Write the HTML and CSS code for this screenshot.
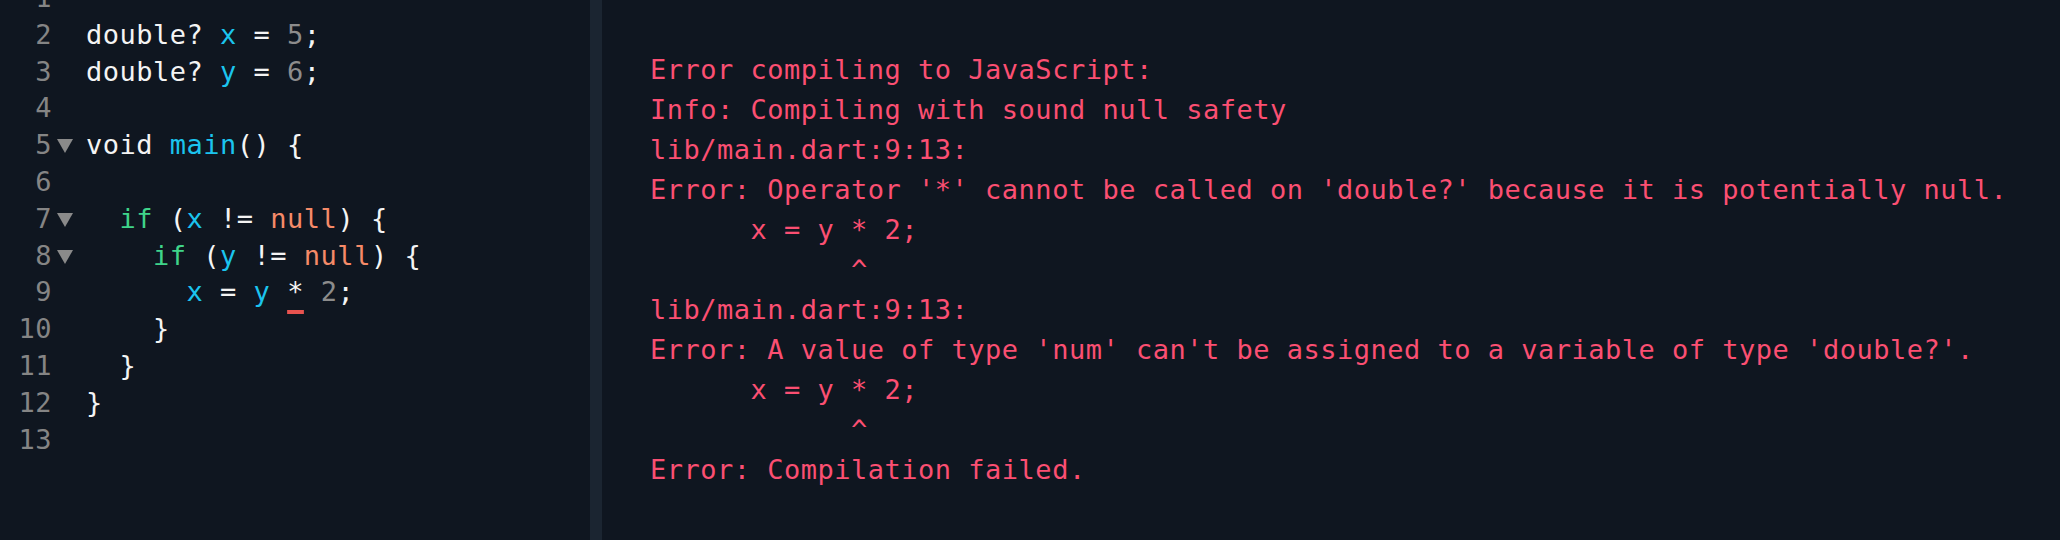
FILE: index.html
```html
<!DOCTYPE html>
<html>
<head>
<meta charset="utf-8">
<link rel="stylesheet" href="styles.css">
</head>
<body>
<div class="app">
  <div class="editor">
    <div class="lines">
      <div class="line"><span class="ln">1</span><span class="fold"></span><span class="code"></span></div>
      <div class="line"><span class="ln">2</span><span class="fold"></span><span class="code">double? <span class="id">x</span> = <span class="num">5</span>;</span></div>
      <div class="line"><span class="ln">3</span><span class="fold"></span><span class="code">double? <span class="id">y</span> = <span class="num">6</span>;</span></div>
      <div class="line"><span class="ln">4</span><span class="fold"></span><span class="code"></span></div>
      <div class="line"><span class="ln">5</span><span class="fold"><svg class="tri" viewBox="0 0 16 14" width="16" height="14"><polygon points="0,0 16,0 8,14" /></svg></span><span class="code">void <span class="id">main</span>() {</span></div>
      <div class="line"><span class="ln">6</span><span class="fold"></span><span class="code"></span></div>
      <div class="line"><span class="ln">7</span><span class="fold"><svg class="tri" viewBox="0 0 16 14" width="16" height="14"><polygon points="0,0 16,0 8,14" /></svg></span><span class="code">  <span class="kw">if</span> (<span class="id">x</span> != <span class="lit">null</span>) {</span></div>
      <div class="line"><span class="ln">8</span><span class="fold"><svg class="tri" viewBox="0 0 16 14" width="16" height="14"><polygon points="0,0 16,0 8,14" /></svg></span><span class="code">    <span class="kw">if</span> (<span class="id">y</span> != <span class="lit">null</span>) {</span></div>
      <div class="line"><span class="ln">9</span><span class="fold"></span><span class="code">      <span class="id">x</span> = <span class="id">y</span> <span class="err">*</span> <span class="num">2</span>;</span></div>
      <div class="line"><span class="ln">10</span><span class="fold"></span><span class="code">    }</span></div>
      <div class="line"><span class="ln">11</span><span class="fold"></span><span class="code">  }</span></div>
      <div class="line"><span class="ln">12</span><span class="fold"></span><span class="code">}</span></div>
      <div class="line"><span class="ln">13</span><span class="fold"></span><span class="code"></span></div>
    </div>
  </div>
  <div class="divider"></div>
  <div class="console">
<pre class="output">Error compiling to JavaScript:
Info: Compiling with sound null safety
lib/main.dart:9:13:
Error: Operator '*' cannot be called on 'double?' because it is potentially null.
      x = y * 2;
            ^
lib/main.dart:9:13:
Error: A value of type 'num' can't be assigned to a variable of type 'double?'.
      x = y * 2;
            ^
Error: Compilation failed.</pre>
  </div>
</div>
</body>
</html>
```

FILE: styles.css
```css
html, body {
  margin: 0;
  padding: 0;
  background: #0f1620;
}

.app {
  display: flex;
  width: 2060px;
  height: 540px;
  overflow: hidden;
  background: #0f1620;
  font-family: "DejaVu Sans Mono", "Liberation Mono", monospace;
  font-size: 27px;
  letter-spacing: 0.5px;
}

.editor {
  width: 590px;
  height: 540px;
  overflow: hidden;
  flex: none;
}

.lines {
  margin-top: -20px;
}

.line {
  display: flex;
  height: 36.8px;
  line-height: 36.8px;
  white-space: pre;
}

.ln {
  width: 52px;
  flex: none;
  text-align: right;
  color: #858585;
  letter-spacing: 0.5px;
}

.fold {
  width: 34px;
  flex: none;
  display: flex;
  align-items: flex-start;
  padding-left: 5px;
  box-sizing: border-box;
}

.tri {
  margin-top: 12px;
  fill: #8a8a8a;
}

.code {
  color: #f4f4f4;
}

.id { color: #1bc4ee; }
.num { color: #8c8c8c; }
.kw { color: #3fd48a; }
.lit { color: #f58a68; }

.err {
  text-decoration: underline;
  text-decoration-color: #e8534f;
  text-decoration-thickness: 4px;
  text-underline-offset: 9px;
  text-decoration-skip-ink: none;
}

.divider {
  width: 12px;
  flex: none;
  background: #1b2531;
}

.console {
  flex: 1;
  padding: 50px 0 0 48px;
}

.output {
  margin: 0;
  font: inherit;
  letter-spacing: 0.5px;
  line-height: 40px;
  color: #fb4f72;
}
```
